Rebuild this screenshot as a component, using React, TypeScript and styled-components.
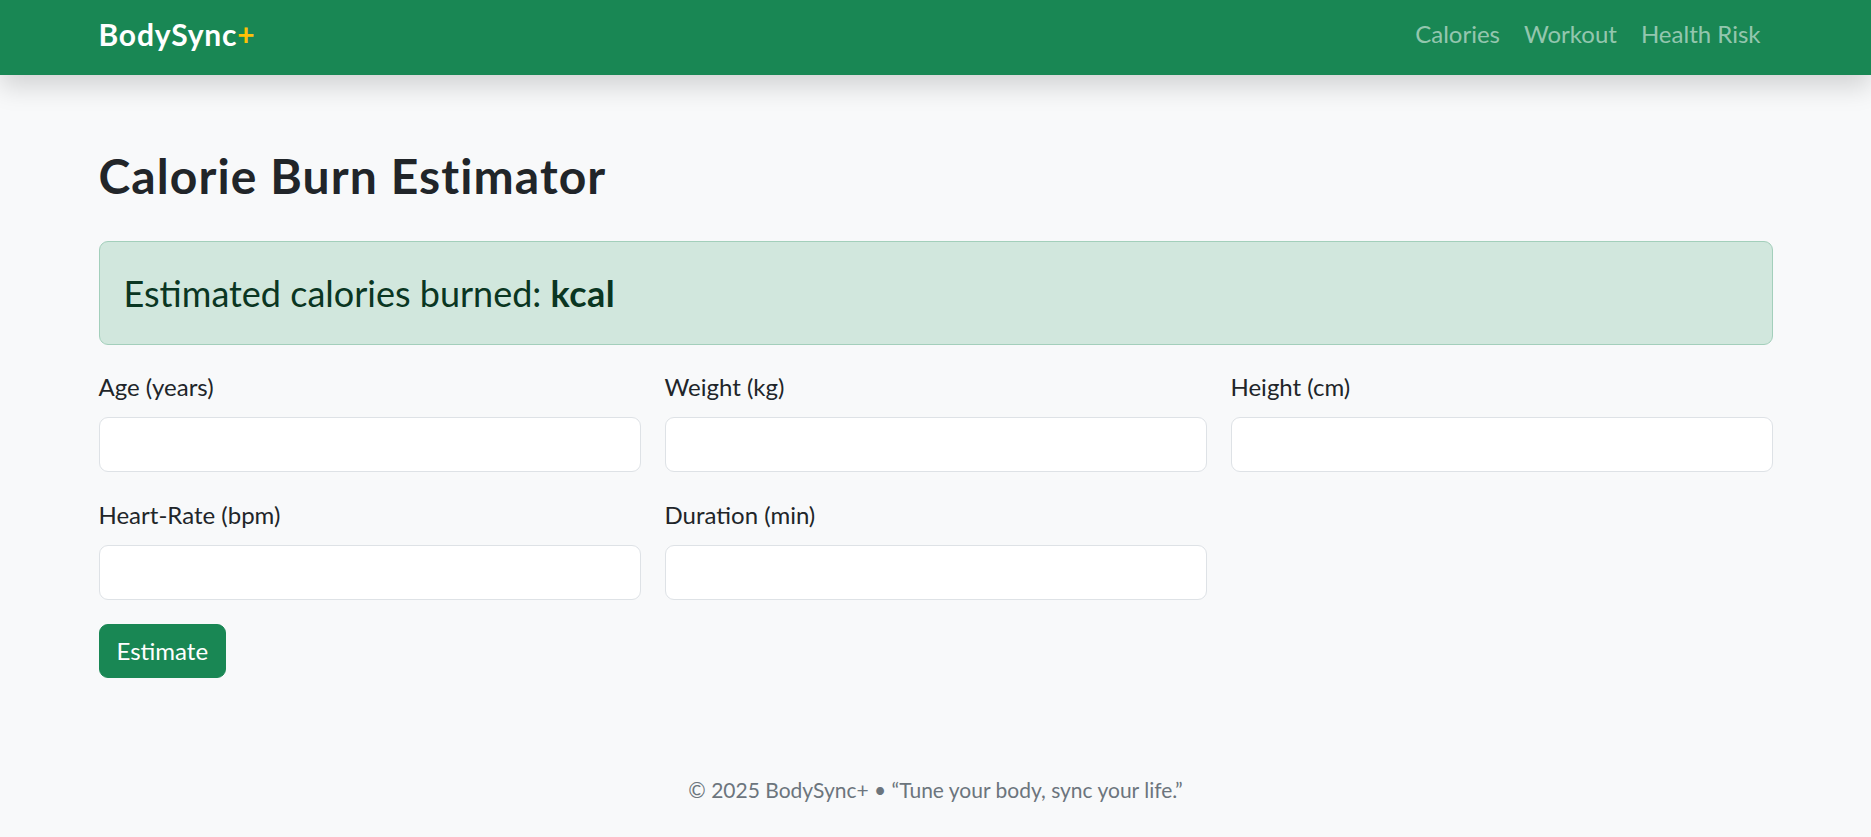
import React from "react";
import styled, { createGlobalStyle } from "styled-components";

const GlobalStyle = createGlobalStyle`
  html, body {
    margin: 0;
    padding: 0;
  }
  body {
    background: #f8f9fa;
    color: #212529;
    font-family: Lato, "Open Sans", "Liberation Sans", sans-serif;
    font-size: 24px;
    line-height: 1.5;
  }
  *, *::before, *::after {
    box-sizing: border-box;
  }
`;

const Navbar = styled.header`
  background: #198754;
  height: 75px;
  box-shadow: 0 12px 24px rgba(0, 0, 0, 0.15);
  position: relative;
  z-index: 1;
`;

const Container = styled.div<{ $pad?: string }>`
  max-width: 1710px;
  margin: 0 auto;
  padding: ${(p) => p.$pad ?? "0 18px"};
`;

const NavInner = styled(Container)`
  height: 75px;
  display: flex;
  align-items: center;
  justify-content: space-between;
  padding-bottom: 7px;
`;

const Brand = styled.a`
  color: #fff;
  font-size: 30px;
  font-weight: 700;
  line-height: 45px;
  letter-spacing: 0.8px;
  text-decoration: none;
`;

const Plus = styled.span`
  color: #ffc107;
`;

const NavList = styled.nav`
  display: flex;
  align-items: center;
`;

const NavLink = styled.a`
  color: rgba(255, 255, 255, 0.55);
  font-size: 24px;
  line-height: 36px;
  padding: 0 12px;
  text-decoration: none;
`;

const Title = styled.h2`
  margin: 0 0 36px;
  font-size: 48px;
  font-weight: 700;
  line-height: 1.2;
  letter-spacing: 1.1px;
  color: #212529;
`;

const Alert = styled.div`
  background: #d1e7dd;
  border: 1px solid #a3cfbb;
  border-radius: 9px;
  color: #0a3622;
  padding: 24px;
  margin-bottom: 24px;
  font-size: 36px;
  line-height: 54px;
`;

const Strong = styled.strong`
  font-weight: 700;
  letter-spacing: 0.4px;
`;

const FormGrid = styled.form`
  display: grid;
  grid-template-columns: repeat(3, 1fr);
  column-gap: 24px;
  row-gap: 25px;
`;

const Field = styled.div`
  display: flex;
  flex-direction: column;
`;

const Label = styled.label`
  font-size: 24px;
  line-height: 36px;
  margin-bottom: 12px;
  color: #212529;
`;

const Input = styled.input`
  width: 100%;
  height: 55px;
  background: #fff;
  border: 1px solid #dee2e6;
  border-radius: 9px;
  padding: 9px 18px;
  font: inherit;
  color: #212529;
  outline: none;
`;

const ButtonRow = styled.div`
  grid-column: 1 / -1;
  margin-top: -1px;
`;

const Button = styled.button`
  background: #198754;
  color: #fff;
  border: 1px solid #198754;
  border-radius: 9px;
  font: inherit;
  font-size: 24px;
  line-height: 36px;
  padding: 8px 17px;
  cursor: pointer;
`;

const Footer = styled.footer`
  text-align: center;
  color: #6c757d;
  font-size: 21px;
  line-height: 31.5px;
  padding: 24px 0 24px;
`;

const fields = [
  { id: "age", label: "Age (years)" },
  { id: "weight", label: "Weight (kg)" },
  { id: "height", label: "Height (cm)" },
  { id: "hr", label: "Heart-Rate (bpm)" },
  { id: "duration", label: "Duration (min)" },
];

export default function App() {
  return (
    <>
      <GlobalStyle />
      <Navbar>
        <NavInner>
          <Brand href="#">
            BodySync<Plus>+</Plus>
          </Brand>
          <NavList>
            <NavLink href="#">Calories</NavLink>
            <NavLink href="#">Workout</NavLink>
            <NavLink href="#">Health Risk</NavLink>
          </NavList>
        </NavInner>
      </Navbar>
      <main>
        <Container $pad="72px 18px">
          <Title>Calorie Burn Estimator</Title>
          <Alert>
            Estimated calories burned: <Strong>kcal</Strong>
          </Alert>
          <FormGrid onSubmit={(e) => e.preventDefault()}>
            {fields.map((f) => (
              <Field key={f.id}>
                <Label htmlFor={f.id}>{f.label}</Label>
                <Input id={f.id} type="number" />
              </Field>
            ))}
            <ButtonRow>
              <Button type="submit">Estimate</Button>
            </ButtonRow>
          </FormGrid>
        </Container>
      </main>
      <Footer>© 2025 BodySync+ • “Tune your body, sync your life.”</Footer>
    </>
  );
}
